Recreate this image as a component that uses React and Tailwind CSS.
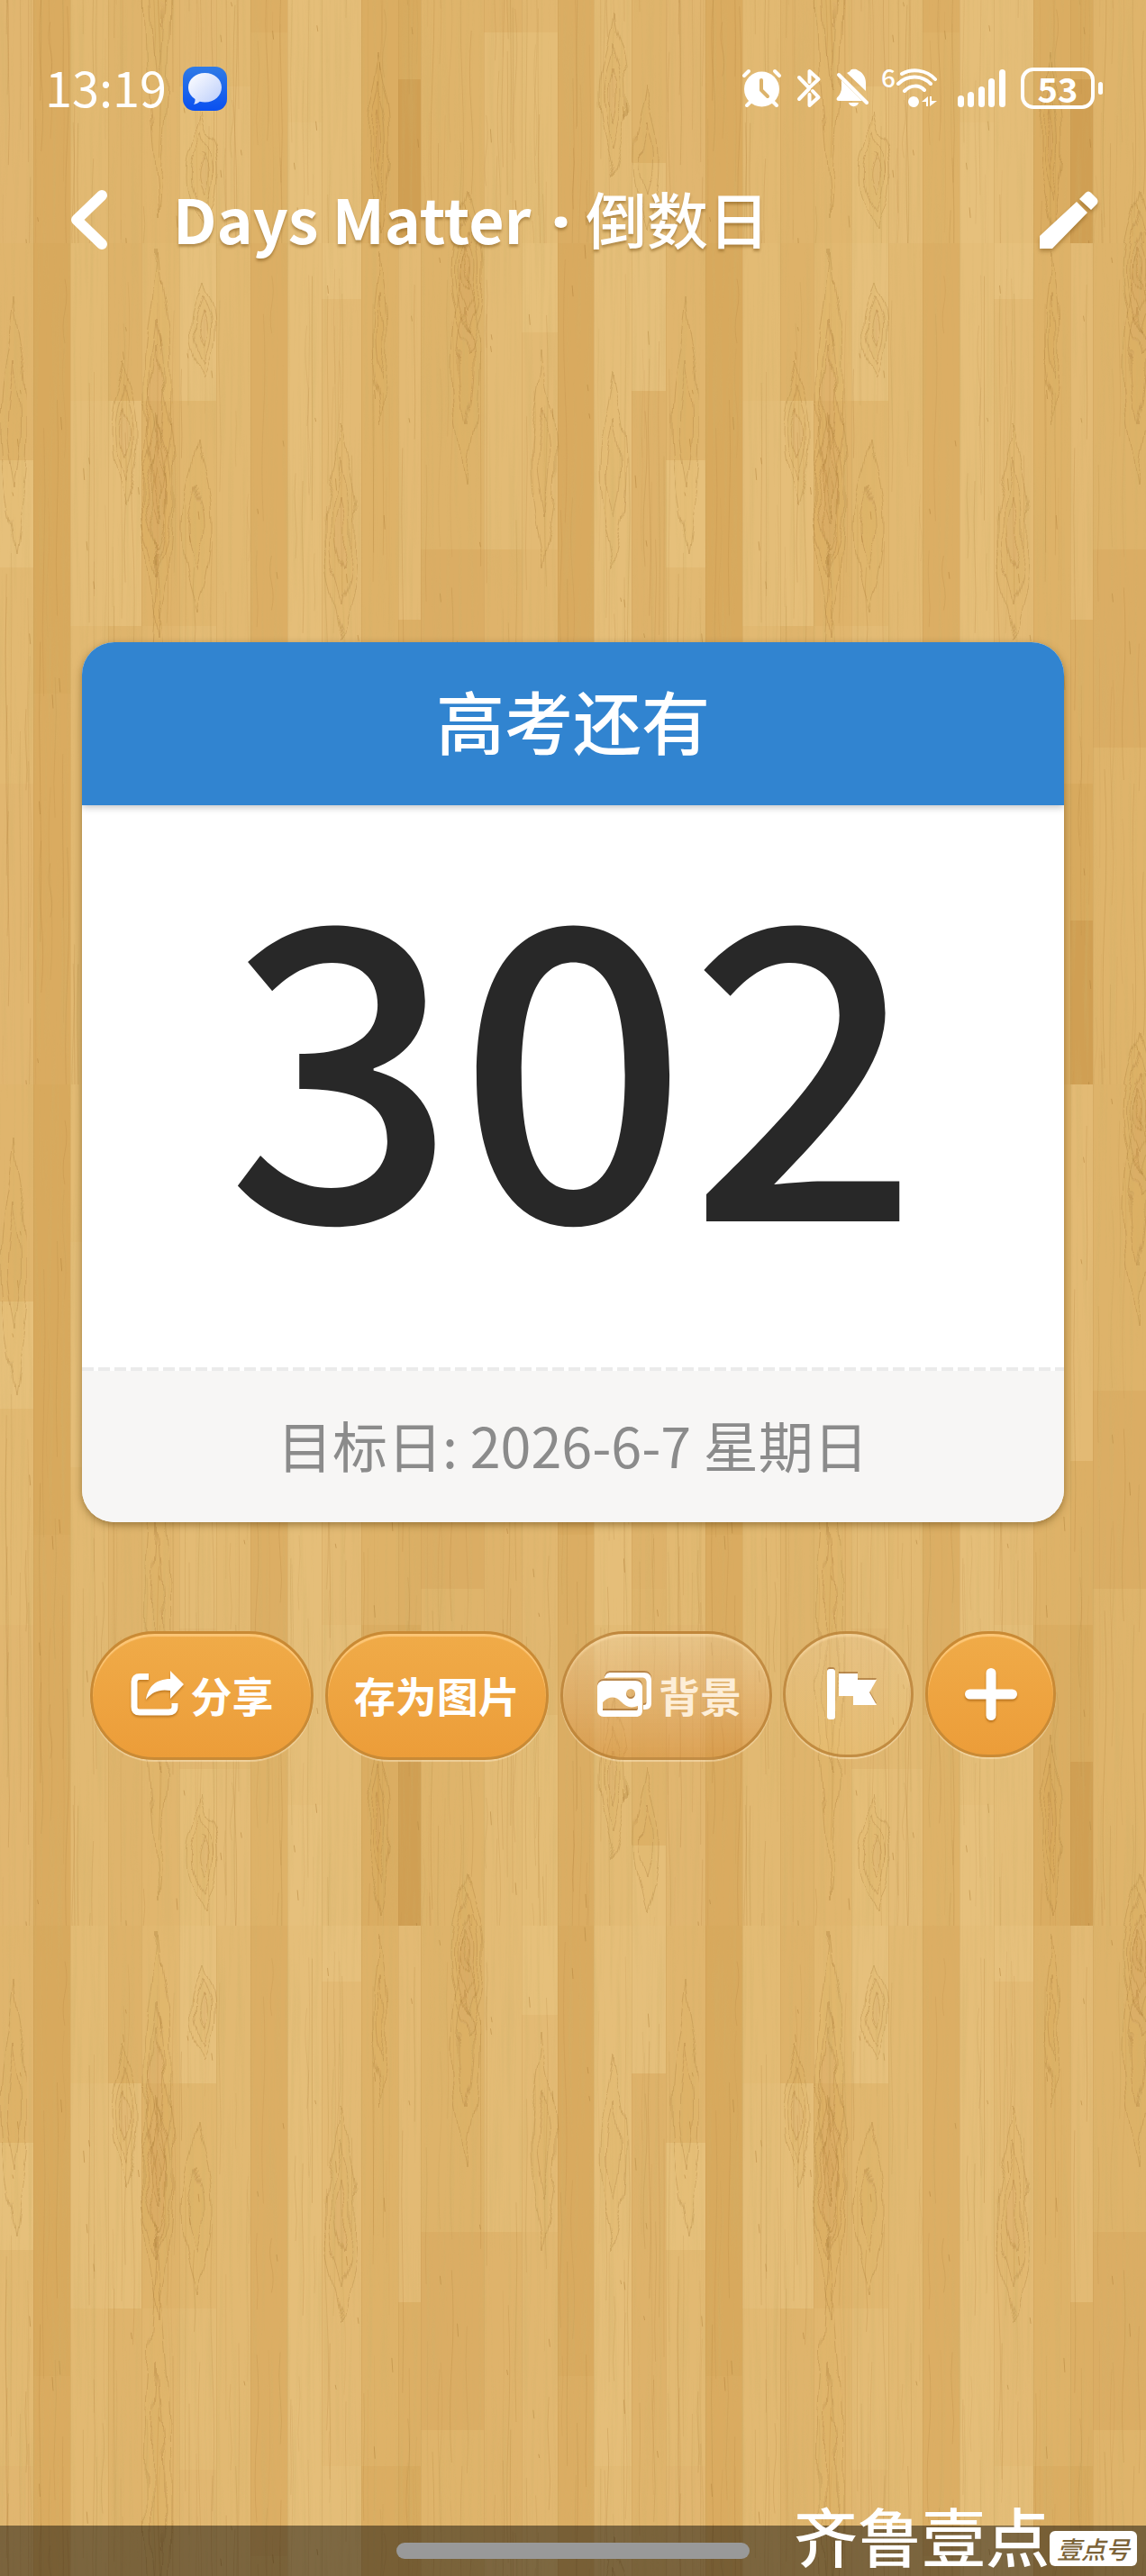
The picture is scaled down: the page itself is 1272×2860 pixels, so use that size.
// src/App.jsx
import React from 'react';

const TILE_W = 746;
const TILE_H = 934;

// x, width, then [startY, color] for every board of that plank
const planks = [
  { x: 0, w: 42, boards: [[0, "#e3bb74"], [175, "#e4bd78"], [425, "#e2b972"]] },
  { x: 42, w: 37, boards: [[0, "#deb269"], [175, "#e5be79"], [425, "#dfb46c"]] },
  { x: 79, w: 42, boards: [[0, "#e2b870"], [175, "#dfb36a"], [425, "#e1b66e"]] },
  { x: 121, w: 41, boards: [[0, "#e6c07c"], [175, "#e1b76f"], [425, "#e3bb75"], [604, "#e1b771"], [760, "#e5be78"]] },
  { x: 162, w: 38, boards: [[0, "#e2b972"], [760, "#e4bc77"]] },
  { x: 200, w: 41, boards: [[0, "#dcae64"], [700, "#deb268"]] },
  { x: 241, w: 38, boards: [[0, "#e5be79"], [800, "#e6c07c"]] },
  { x: 279, w: 44, boards: [[0, "#e6c07c"], [62, "#e3ba74"], [600, "#e4bd78"]] },
  { x: 323, w: 41, boards: [[0, "#deb268"], [600, "#dbad62"]] },
  { x: 364, w: 25, boards: [[0, "#e3ba74"], [418, "#dcaf65"], [600, "#d8aa5e"], [752, "#d09f53"]] },
  { x: 389, w: 70, boards: [[0, "#deb36a"], [340, "#dbad64"], [560, "#dfb46b"]] },
  { x: 459, w: 42, boards: [[0, "#e3bb75"], [340, "#dfb36b"], [700, "#e3bb75"]] },
  { x: 501, w: 40, boards: [[0, "#e6c07b"], [99, "#e3ba74"], [340, "#e1b770"], [700, "#e4bd77"]] },
  { x: 541, w: 40, boards: [[0, "#d9aa5f"], [500, "#dbad63"]] },
  { x: 581, w: 42, boards: [[0, "#e5be79"], [600, "#e3bb75"]] },
  { x: 623, w: 38, boards: [[0, "#e5bf7b"], [164, "#deb26a"], [560, "#dfb46c"], [845, "#e5be79"]] },
  { x: 661, w: 44, boards: [[0, "#e0b56d"], [241, "#e6c07b"], [360, "#e2b972"], [600, "#e1b670"]] },
  { x: 705, w: 41, boards: [[0, "#d8a95d"], [500, "#daab60"]] },
];

// long pointed growth rings: cx, top, height, half width, rings
const rings = [
  [60, 130, 160, 14, 3],
  [97, 5, 300, 14, 2],
  [97, 110, 330, 17, 2],
  [95, 190, 180, 17, 3],
  [97, 345, 560, 14, 2],
  [147, 40, 110, 13, 3],
  [147, 790, 130, 16, 3],
  [140, 220, 190, 16, 2],
  [300, 200, 240, 18, 3],
  [342, 720, 200, 14, 3],
  [344, 10, 190, 8, 2],
  [438, 6, 260, 14, 2],
  [440, -60, 180, 18, 4],
  [440, 874, 180, 18, 4],
  [525, 120, 240, 14, 2],
  [602, 680, 180, 15, 3],
  [602, 140, 220, 15, 2],
  [640, 760, 160, 13, 2],
  [683, 60, 280, 15, 2],
];

const makeRandom = (seed) => {
  let s = seed;
  return () => {
    s = (s * 16807) % 2147483647;
    return s / 2147483647;
  };
};

const makeStreaks = () => {
  const rand = makeRandom(4127);
  const list = [];
  planks.forEach((p) => {
    const count = Math.round(p.w / 3);
    for (let i = 0; i < count; i++) {
      const x = p.x + 2 + rand() * (p.w - 4);
      const y = rand() * TILE_H;
      const len = 60 + rand() * 280;
      const bend = (rand() - 0.5) * 8;
      list.push({
        d: `M${x.toFixed(1)} ${y.toFixed(1)}q${bend.toFixed(1)} ${(len / 4).toFixed(1)} 0 ${(len / 2).toFixed(1)}t0 ${(len / 2).toFixed(1)}`,
        o: 0.08 + rand() * 0.2,
      });
    }
    // small dark flecks
    for (let i = 0; i < 5; i++) {
      const x = p.x + 3 + rand() * (p.w - 6);
      const y = rand() * TILE_H;
      list.push({ d: `M${x.toFixed(1)} ${y.toFixed(1)}l1 ${(4 + rand() * 12).toFixed(1)}`, o: 0.5 });
    }
  });
  return list;
};

const streaks = makeStreaks();

const ringPath = (cx, top, h, r) => {
  const b = top + h;
  return `M${cx} ${top}C${cx + r * 0.3} ${top + h * 0.2} ${cx + r} ${top + h * 0.25} ${cx + r} ${top + h * 0.5}S${cx + r * 0.4} ${b - h * 0.15} ${cx + 1} ${b}C${cx - r * 0.5} ${b - h * 0.2} ${cx - r} ${b - h * 0.3} ${cx - r} ${top + h * 0.5}S${cx - r * 0.3} ${top + h * 0.2} ${cx} ${top}`;
};

const WoodBackground = () => (
  <svg className="absolute inset-0 w-full h-full" aria-hidden="true">
    <defs>
      <filter id="wavy" x="0" y="0" width="100%" height="100%">
        <feTurbulence type="fractalNoise" baseFrequency="0.05 0.02" numOctaves="2" seed="3" />
        <feDisplacementMap in="SourceGraphic" scale="16" xChannelSelector="R" yChannelSelector="G" />
      </filter>
      <pattern id="wood" x="78" y="270" width={TILE_W} height={TILE_H} patternUnits="userSpaceOnUse">
        {planks.map((p) => (
          <g key={p.x}>
            {p.boards.map(([y, color], i) => {
              const end = i + 1 < p.boards.length ? p.boards[i + 1][0] : TILE_H;
              return <rect key={y} x={p.x} y={y} width={p.w + 1} height={end - y + 1} fill={color} />;
            })}
            <path d={`M${p.x + 0.5} 0V${TILE_H}`} stroke="#b98a45" strokeOpacity="0.2" />
          </g>
        ))}
        <g fill="none" stroke="#b07f38">
          {streaks.map((s, i) => (
            <path key={i} d={s.d} strokeOpacity={s.o} />
          ))}
        </g>
        <g fill="#c08a3c" fillOpacity="0.03" stroke="#a87a34" strokeOpacity="0.34" filter="url(#wavy)">
          {rings.map(([cx, top, h, r, n], i) =>
            Array.from({ length: n }, (_, k) => {
              const f = (k + 1) / n;
              return <path key={`${i}-${k}`} d={ringPath(cx, top + (h * (1 - f)) / 2, h * f, r * f)} />;
            })
          )}
        </g>
      </pattern>
      <filter id="grain" x="0" y="0" width="100%" height="100%">
        <feTurbulence type="fractalNoise" baseFrequency="0.22 0.006" numOctaves="3" seed="8" />
        <feColorMatrix values="0 0 0 0 0.62  0 0 0 0 0.44  0 0 0 0 0.14  1.6 0 0 0 -0.72" />
      </filter>
    </defs>
    <rect width="100%" height="100%" fill="url(#wood)" />
    <rect width="100%" height="100%" filter="url(#grain)" opacity="0.45" />
  </svg>
);

const MessageIcon = () => (
  <svg className="w-[49px] h-[49px]" viewBox="0 0 49 49">
    <defs>
      <linearGradient id="msgBg" x1="0" y1="0" x2="0" y2="1">
        <stop offset="0" stopColor="#2f7be6" />
        <stop offset="1" stopColor="#0a50f0" />
      </linearGradient>
      <linearGradient id="msgBubble" x1="0" y1="0" x2="1" y2="1">
        <stop offset="0" stopColor="#ffffff" />
        <stop offset="1" stopColor="#b9ccfb" />
      </linearGradient>
    </defs>
    <rect width="49" height="49" rx="13" fill="url(#msgBg)" />
    <path d="M24.5 7C35 7 43 14 43 23S35 39.500 24.500 39.500C22.500 39.500 20.600 39.200 18.800 38.700C16.500 40.500 14.500 41.600 11.800 42C13.300 40.300 13.700 38 13.500 36C9 33 6 28.400 6 23C6 14 14 7 24.500 7Z" fill="url(#msgBubble)" />
  </svg>
);

const AlarmIcon = () => (
  <svg className="w-[45px] h-[44px]" viewBox="0 0 45 44" fill="none" stroke="#fff" strokeWidth="4" strokeLinecap="round">
    <path d="M3 8L8 3M42 8L37 3M11 36L6 41M34 36L39 41" />
    <circle cx="22.500" cy="23" r="19.500" fill="#fff" stroke="none" />
    <path d="M22 13V24L29 31" stroke="#dcb36b" strokeLinejoin="round" />
  </svg>
);

const BluetoothIcon = () => (
  <svg className="w-[28px] h-[44px]" viewBox="0 0 28 44" fill="none" stroke="#fff" strokeWidth="4" strokeLinecap="round" strokeLinejoin="round">
    <path d="M3 10L14 21.500L24.500 12L14.500 3V15M3 34L14 22.500M14.500 29V41L24.500 32L18 25" />
  </svg>
);

const BellOffIcon = () => (
  <svg className="w-[38px] h-[44px]" viewBox="0 0 38 44" fill="#fff">
    <path d="M12 5C14 4 15.500 3.500 16 2C17 0.300 23 0.300 24 2C29 4 33 9 33 16V25L12 5ZM6 13L29 36H3C0 36 0 33 2 31.500C5 28 6 25 6 20ZM14 38H25C24 43.500 15 43.500 14 38Z" />
    <path d="M3 7L34 38" stroke="#fff" strokeWidth="4" strokeLinecap="round" />
  </svg>
);

const WifiIcon = () => (
  <svg className="w-[47px] h-[44px]" viewBox="0 0 47 44" fill="none" stroke="#fff" strokeWidth="4" strokeLinecap="round">
    <path d="M7 6C18 0 34 1 44 12M3 17C13 7 29 7 39 17M10 25C17 18 26 18 32 24" />
    <circle cx="20" cy="37" r="6" fill="#fff" stroke="none" />
    <path d="M29 37L36 31V42H34V37ZM38 42V31H40V36H46Z" fill="#fff" stroke="none" />
  </svg>
);

const SignalIcon = () => (
  <svg className="w-[54px] h-[44px]" viewBox="0 0 54 44" fill="#fff">
    <rect x="0" y="30" width="7" height="13" rx="3.500" />
    <rect x="11" y="26" width="7" height="17" rx="3.500" />
    <rect x="23" y="20" width="7" height="23" rx="3.500" />
    <rect x="34" y="11" width="7" height="32" rx="3.500" />
    <rect x="46" y="1" width="7" height="42" rx="3.500" />
  </svg>
);

const ShareIcon = () => (
  <svg className="w-[59px] h-[52px] drop-shadow-[0_2px_1px_rgba(150,85,10,0.5)]" viewBox="0 0 59 52">
    <path d="M20 6.500H10C6 6.500 4 8.500 4 12V40C4 44 6 46 10 46H42C46.500 46 49 44 49 40V36" fill="none" stroke="#fff" strokeWidth="7" />
    <path d="M44 0L59 15L44 31V22C33 20 24 23 17 32C19 18 28 9 44 9Z" fill="#fff" />
  </svg>
);

const GalleryIcon = () => (
  <svg className="w-[60px] h-[52px] drop-shadow-[0_-2px_0px_rgba(150,95,40,0.55)]" viewBox="0 0 60 52" fill="#fff">
    <path fillRule="evenodd" d="M15 2H52C57 2 60 5 60 10V36C60 40 58 43 53 43L51 43V38C54 38 54.500 37 54.500 35V13C54.500 9 53 7.500 49 7.500H16C12 7.500 9 8 8 8C9 4 11 2 15 2Z" />
    <path fillRule="evenodd" d="M7 11H42C47 11 50 14 50 18V44C50 49 47 51 43 51H7C3 51 0 48 0 44V18C0 14 3 11 7 11ZM37 20A5 5.500 0 1 0 37 31A5 5.500 0 1 0 37 20ZM6 35V44H43C45 44 45 43 45 39C37 42 32 40 26 34C20 28 13 28 6 35Z" />
  </svg>
);

const FlagIcon = () => (
  <svg className="w-[56px] h-[58px] drop-shadow-[0_-2px_0px_rgba(150,95,40,0.55)]" viewBox="0 0 56 58" fill="#fff">
    <rect x="0" y="1" width="9" height="56" rx="3" />
    <path d="M13 6H34V13H55L47 27L55 41H29V31H13Z" />
  </svg>
);

const PlusIcon = () => (
  <svg className="w-[60px] h-[60px] drop-shadow-[0_2px_1px_rgba(150,85,10,0.6)]" viewBox="0 0 60 60" stroke="#fff" strokeWidth="11" strokeLinecap="round">
    <path d="M30 6.500V53.500M6.500 30H53.500" />
  </svg>
);

const solid = "border-[#c98a35] bg-linear-to-b from-[#f0ab48] to-[#ec9d39] shadow-[inset_0_3px_1px_rgba(255,205,130,0.8),0_2px_1px_rgba(255,235,200,0.5)]";
const clear = "border-[#b97f35]/80 bg-linear-to-b from-[#f3d9ac]/40 to-[#d8903c]/50 shadow-[inset_0_3px_2px_rgba(255,225,175,0.5),0_2px_1px_rgba(255,235,200,0.5)]";
const ghost = "border-[#b97f35]/80 bg-linear-to-b from-[#f3d9ac]/30 to-[#f0c878]/30 shadow-[inset_0_3px_2px_rgba(255,225,175,0.5),0_2px_1px_rgba(255,235,200,0.5)]";

const App = () => {
  return (
    <div className="relative isolate min-h-screen flex flex-col bg-[#deb36a] text-white font-['Noto_Sans_CJK_SC',sans-serif]">
      <div className="absolute inset-0 -z-10">
        <WoodBackground />
      </div>

      {/* Status bar */}
      <div className="flex items-center justify-between pt-[68px] pl-[50px] pr-12">
        <div className="flex items-center gap-[18px]">
          <span className="pb-1 text-[54px] leading-[56px]">13:19</span>
          <MessageIcon />
        </div>
        <div className="flex items-center">
          <AlarmIcon />
          <span className="ml-4"><BluetoothIcon /></span>
          <span className="ml-4"><BellOffIcon /></span>
          <span className="ml-3 self-start text-[28px] leading-[20px] font-medium">6</span>
          <WifiIcon />
          <span className="ml-[22px]"><SignalIcon /></span>
          <span className="ml-4 flex items-center justify-center w-[82px] h-[46px] rounded-[14px] border-4 border-white text-[38px] leading-[36px] font-bold">53</span>
          <span className="ml-1 w-[5px] h-[14px] rounded-full bg-white" />
        </div>
      </div>

      {/* Title bar */}
      <header className="flex items-center justify-between mt-[66px] pl-[76px] pr-[52px]">
        <div className="flex items-center gap-[72px]">
          <button aria-label="返回">
            <svg className="w-[44px] h-[68px]" viewBox="0 0 44 68" fill="none" stroke="#fff" strokeWidth="12" strokeLinecap="round" strokeLinejoin="round">
              <path d="M37 7L9 34L37 61" />
            </svg>
          </button>
          <h1 className="text-[68px] leading-[96px] font-medium text-shadow-[0_3px_3px_rgba(120,80,20,0.45)]">
            <span className="font-bold">Days Matter </span>
            <span className="pl-2 font-['Open_Sans'] font-extrabold">· </span>
            倒数日
          </h1>
        </div>
        <button aria-label="编辑">
          <svg className="w-[68px] h-[66px] drop-shadow-[0_3px_2px_rgba(120,80,20,0.45)]" viewBox="0 0 68 66" fill="#fff">
            <path d="M2 51L43 13L55 25L16 65H2ZM46 10L53 3C55 1 57 1 59 3L65 9C67 11 67 14 65 16L59 22Z" />
          </svg>
        </button>
      </header>

      {/* Countdown card */}
      <main className="mt-[420px] px-[91px]">
        <section className="rounded-[36px] overflow-hidden bg-white shadow-[0_3px_8px_rgba(90,60,10,0.5)]">
          <h2 className="relative bg-[#3184d0] pt-[36px] pb-[44px] text-center text-[76px] leading-[101px] font-medium shadow-[0_2px_8px_rgba(0,0,0,0.25)]">高考还有</h2>
          <div className="pb-[92px] text-center text-[450px] leading-[532px] font-medium text-[#282828]">302</div>
          <div className="h-1 bg-[repeating-linear-gradient(90deg,#ebebeb_0_13px,#ffffff_13px_18px)]" />
          <div className="bg-[#f7f6f5] pt-[40px] pb-[44px] text-center text-[61px] leading-[84px] text-[#8b8b8b]">
            目标日: 2026-6-7 星期日
          </div>
        </section>

        {/* Actions */}
        <div className="mt-[121px] flex items-start justify-between px-[9px] text-[46px] leading-none font-bold">
          <button className={`flex items-center justify-center gap-2 w-[248px] h-[143px] pb-1 rounded-full border-3 ${solid}`}>
            <ShareIcon />
            分享
          </button>
          <button className={`flex items-center justify-center w-[248px] h-[143px] pb-1 rounded-full border-3 ${solid}`}>存为图片</button>
          <button className={`flex items-center justify-center gap-2 w-[235px] h-[143px] pl-2 pb-1 rounded-full border-3 ${clear}`}>
            <GalleryIcon />
            <span className="text-[#fdeed8]">背景</span>
          </button>
          <button aria-label="标记" className={`flex items-center justify-center w-[145px] h-[140px] pl-2 rounded-full border-3 ${ghost}`}>
            <FlagIcon />
          </button>
          <button aria-label="添加" className={`flex items-center justify-center w-[145px] h-[140px] rounded-full border-3 ${solid}`}>
            <PlusIcon />
          </button>
        </div>
      </main>

      {/* Navigation bar */}
      <footer className="relative mt-auto flex items-center justify-center h-14 bg-black/45">
        <div className="w-[392px] h-[18px] rounded-full bg-[#999999]" />
        <div className="absolute right-[10px] bottom-[11px] flex items-end">
          <span className="text-[71px] leading-[72px] font-medium">齐鲁壹点</span>
          <span className="rounded-md bg-white px-2 text-[27px] leading-[39px] italic font-medium text-[#7c6338]">壹点号</span>
        </div>
      </footer>
    </div>
  );
};

export default App;
